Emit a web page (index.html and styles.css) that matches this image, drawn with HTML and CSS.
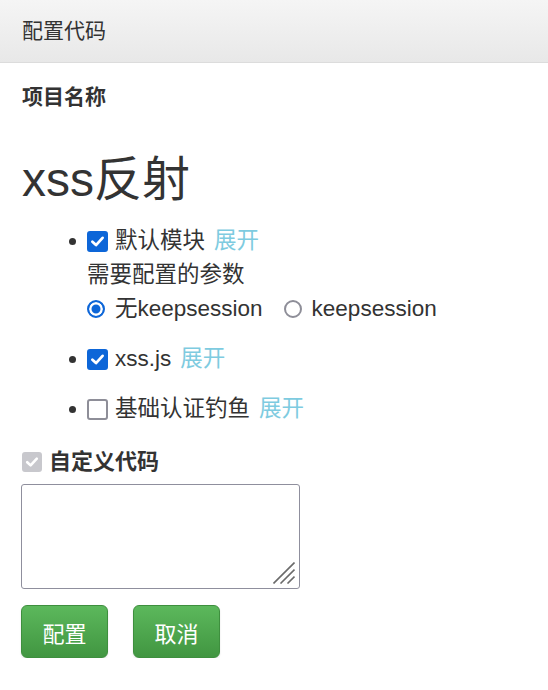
FILE: index.html
```html
<!DOCTYPE html>
<html lang="zh">
<head>
<meta charset="utf-8">
<title>配置代码</title>
<link rel="stylesheet" href="styles.css">
</head>
<body>
<div class="panel">
  <div class="panel-heading">配置代码</div>
  <div class="panel-body">
    <h4 class="label-title">项目名称</h4>
    <h1 class="project">xss反射</h1>
    <ul class="modules">
      <li>
        <div class="line"><input type="checkbox" class="cb" checked><span>默认模块</span><a class="toggle">展开</a></div>
        <div class="line">需要配置的参数</div>
        <div class="line radios">
          <label class="radio"><input type="radio" class="rb" name="ks" checked>无keepsession</label>
          <label class="radio"><input type="radio" class="rb" name="ks">keepsession</label>
        </div>
      </li>
      <li>
        <div class="line"><input type="checkbox" class="cb" checked><span>xss.js</span><a class="toggle">展开</a></div>
      </li>
      <li>
        <div class="line"><input type="checkbox" class="cb"><span>基础认证钓鱼</span><a class="toggle">展开</a></div>
      </li>
    </ul>
    <label class="custom"><input type="checkbox" class="cb" checked disabled>自定义代码</label>
    <div class="code-wrap">
      <textarea class="code"></textarea>
      <svg class="grip" width="22" height="22" viewBox="0 0 22 22" aria-hidden="true">
        <path d="M0.5 21.5 L21.5 0.5 M7.5 21.5 L21.5 7.5 M14.5 21.5 L21.5 14.5" stroke="#6b6b6b" stroke-width="1.6" fill="none"/>
      </svg>
    </div>
    <div class="actions">
      <button class="btn">配置</button>
      <button class="btn">取消</button>
    </div>
  </div>
</div>
</body>
</html>
```
FILE: styles.css
```css
html, body {
  margin: 0;
  padding: 0;
  background: #fff;
}
body {
  font-family: "Liberation Sans", "Noto Sans CJK SC", sans-serif;
  color: #333;
}
.panel-heading {
  height: 62px;
  line-height: 62px;
  padding: 0 22px;
  font-size: 21px;
  background: linear-gradient(#f5f5f5, #e8e8e8);
  border-bottom: 1px solid #dcdcdc;
}
.panel-body {
  padding: 0 21px;
}
.label-title {
  margin: 19px 0 0 1px;
  font-size: 21px;
  line-height: 30px;
  font-weight: bold;
}
.project {
  margin: 40px 0 0 1px;
  font-size: 48px;
  line-height: 56px;
  font-weight: normal;
}
.modules {
  margin: 16px 0 0;
  padding-left: 66px;
  font-size: 22.5px;
  line-height: 34px;
  list-style: none;
}
.modules li {
  position: relative;
  margin-bottom: 16px;
}
.modules li::before {
  content: "";
  position: absolute;
  left: -18px;
  top: 14px;
  width: 7px;
  height: 7px;
  border-radius: 50%;
  background: #333;
}
.line {
  display: flex;
  align-items: center;
  white-space: pre;
}
.cb {
  appearance: none;
  -webkit-appearance: none;
  box-sizing: border-box;
  flex: none;
  width: 21px;
  height: 21px;
  margin: 0 7px 0 0;
  border: 2.5px solid #8e8e98;
  border-radius: 3px;
  background: #fff;
}
.cb:checked {
  border-color: #0d66d8;
  background: #0d66d8 url("data:image/svg+xml,%3Csvg xmlns='http://www.w3.org/2000/svg' viewBox='0 0 16 16'%3E%3Cpath d='M3.2 8.2 L6.6 11.4 L12.8 4.6' stroke='white' stroke-width='2.6' fill='none' stroke-linecap='round' stroke-linejoin='round'/%3E%3C/svg%3E") center / 100% 100% no-repeat;
}
.cb:checked:disabled {
  border-color: #c8c8cd;
  background-color: #c8c8cd;
}
.toggle {
  margin-left: 9px;
  color: #7ecbe0;
}
.radios {
  gap: 21px;
}
.radio {
  display: flex;
  align-items: center;
}
.rb {
  appearance: none;
  -webkit-appearance: none;
  box-sizing: border-box;
  flex: none;
  width: 18px;
  height: 18px;
  margin: 0 10px 0 0;
  border: 2.5px solid #8e8e98;
  border-radius: 50%;
  background: #fff;
}
.rb:checked {
  border-color: #0d66d8;
  background: #0d66d8;
  box-shadow: inset 0 0 0 2.5px #fff;
}
.custom {
  display: flex;
  align-items: center;
  margin-top: 19px;
  font-size: 22px;
  line-height: 34px;
  font-weight: bold;
}
.custom .cb {
  margin-left: 1px;
  width: 20px;
  height: 20px;
}
.code-wrap {
  position: relative;
  width: 279px;
  height: 105px;
  margin-top: 5px;
}
.code {
  display: block;
  box-sizing: border-box;
  width: 279px;
  height: 105px;
  margin: 0;
  border: 1px solid #8f8f9d;
  border-radius: 3px;
  resize: none;
}
.grip {
  position: absolute;
  right: 5px;
  bottom: 5px;
}
.actions {
  display: flex;
  gap: 25px;
  margin-top: 16px;
}
.btn {
  box-sizing: border-box;
  width: 87px;
  height: 53px;
  padding: 0;
  font-family: inherit;
  font-size: 22px;
  color: #fff;
  background: linear-gradient(#5cb85c, #419641);
  border: 1px solid #3e8f3e;
  border-radius: 6px;
  box-shadow: 0 1px 2px rgba(0, 0, 0, 0.12);
}
```
